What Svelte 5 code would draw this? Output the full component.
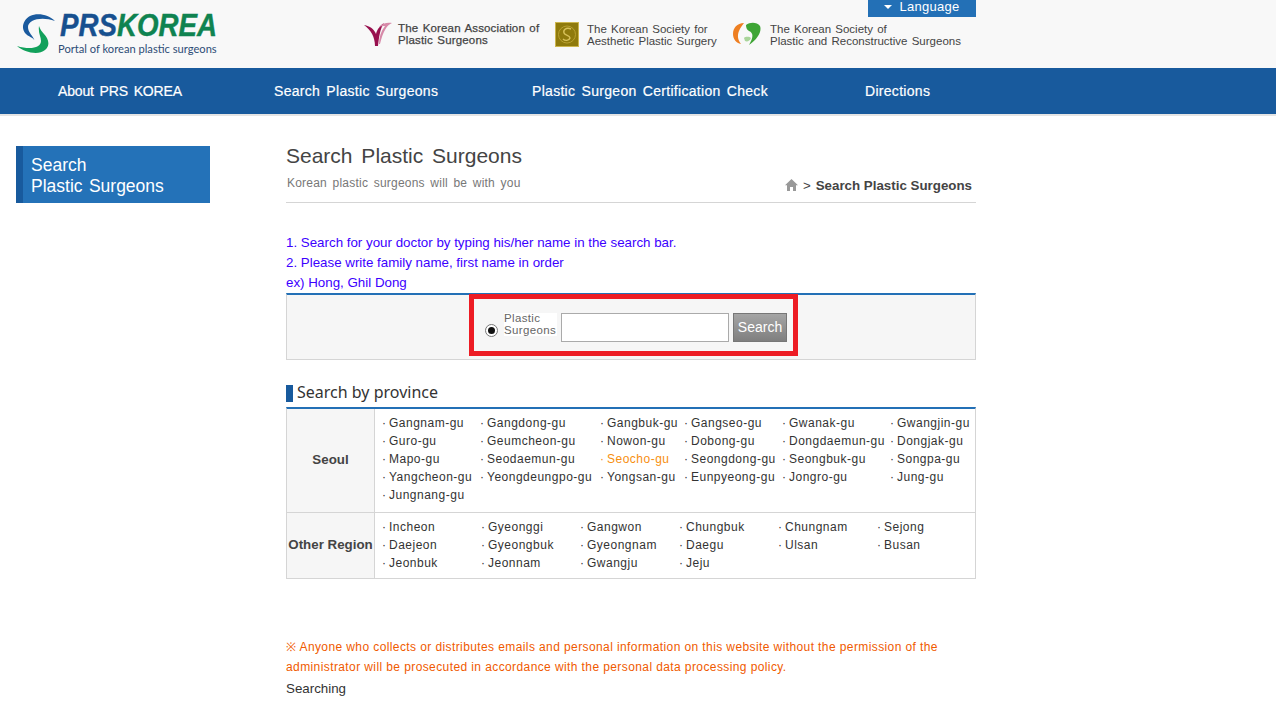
<script lang="ts">
  const seoul = [
    ['Gangnam-gu', 'Gangdong-gu', 'Gangbuk-gu', 'Gangseo-gu', 'Gwanak-gu', 'Gwangjin-gu'],
    ['Guro-gu', 'Geumcheon-gu', 'Nowon-gu', 'Dobong-gu', 'Dongdaemun-gu', 'Dongjak-gu'],
    ['Mapo-gu', 'Seodaemun-gu', 'Seocho-gu', 'Seongdong-gu', 'Seongbuk-gu', 'Songpa-gu'],
    ['Yangcheon-gu', 'Yeongdeungpo-gu', 'Yongsan-gu', 'Eunpyeong-gu', 'Jongro-gu', 'Jung-gu'],
    ['Jungnang-gu']
  ];
  const others = [
    'Incheon', 'Gyeonggi', 'Gangwon', 'Chungbuk', 'Chungnam', 'Sejong',
    'Daejeon', 'Gyeongbuk', 'Gyeongnam', 'Daegu', 'Ulsan', 'Busan',
    'Jeonbuk', 'Jeonnam', 'Gwangju', 'Jeju'
  ];
  const navItems = ['About PRS KOREA', 'Search Plastic Surgeons', 'Plastic Surgeon Certification Check', 'Directions'];
</script>

<header class="top">
  <div class="top-inner">
    <a class="logo" href="#top">
      <svg class="logo-mark" width="40" height="42" viewBox="0 0 40 42">
        <path d="M39 8C33 2 22 -1 14 3C7 7 5 15 9 20C12 24 18 24 19 29C17 22 12 20 12 14C12 7 25 3 39 8Z" fill="#1a5a9e" />
        <path d="M1 33C8 39 22 43 29 37C35 32 32 25 28 21C26 19 24 16 23 13C22 20 25 24 25 28C25 35 14 37 1 33Z" fill="#12a15b" />
      </svg>
      <span class="logo-text">
        <span class="logo-name"><span class="prs">PRS</span><span class="korea">KOREA</span></span>
        <span class="logo-sub">Portal of korean plastic surgeons</span>
      </span>
    </a>
    <div class="top-right">
      <button class="lang"><span class="caret"></span>Language</button>
      <div class="societies">
        <div class="society s1">
          <svg width="28" height="24" viewBox="0 0 28 24">
            <path d="M0 3C6 4 10 7 12 12C13 7 17 3 20 1C16 7 15 15 14 24H11C11 15 7 8 0 3Z" fill="#98104e" />
            <path d="M15 5C18 1 24 0 28 1C23 3 19 9 16 22H15C15 15 17 9 21 4C19 4 17 4 15 5Z" fill="#d78aa9" />
          </svg>
          <span>The Korean Association of<br />Plastic Surgeons</span>
        </div>
        <div class="society s2">
          <svg width="24" height="25" viewBox="0 0 24 25">
            <rect width="24" height="25" fill="#cdb64e" />
            <rect x="1" y="1" width="22" height="23" fill="#8f7a0c" />
            <circle cx="12" cy="12.5" r="8.5" fill="none" stroke="#b8a030" stroke-width="1" />
            <path d="M16 7C11 5 8 8 9 11C10 14 15 13 15 16C14 19 10 19 8 17" fill="none" stroke="#d8c25a" stroke-width="1.4" />
          </svg>
          <span>The Korean Society for<br />Aesthetic Plastic Surgery</span>
        </div>
        <div class="society s3">
          <svg width="28" height="24" viewBox="0 0 28 24">
            <path d="M11 1C4 1 0 6 0 12C0 17 3 21 8 22C5 18 4 14 6 9C7 6 9 4 11 1Z" fill="#ee7f22" />
            <path d="M13 3C17 0 24 0 27 4C29 9 25 17 16 23C20 16 21 11 16 9C14 8 13 6 13 3Z" fill="#3ea535" />
            <path d="M11 16C13 14 17 15 18 16C17 19 14 20 12 19Z" fill="#a9d59a" />
          </svg>
          <span>The Korean Society of<br />Plastic and Reconstructive Surgeons</span>
        </div>
      </div>
    </div>
  </div>
</header>

<nav class="nav">
  {#each navItems as item}
    <a href="#top">{item}</a>
  {/each}
</nav>

<div class="page">
  <aside class="side">
    <h2>Search<br />Plastic Surgeons</h2>
  </aside>

  <main class="content">
    <div class="title-block">
      <div>
        <h1>Search Plastic Surgeons</h1>
        <p class="subtitle">Korean plastic surgeons will be with you</p>
      </div>
      <div class="crumb">
        <svg width="13" height="12" viewBox="0 0 13 12">
          <path d="M6.5 0L13 6.2H11V12H8V8H5V12H2V6.2H0Z" fill="#999" />
        </svg>
        <span class="sep">&gt;</span>
        <strong>Search Plastic Surgeons</strong>
      </div>
    </div>

    <div class="notes">
      <p>1. Search for your doctor by typing his/her name in the search bar.</p>
      <p>2. Please write family name, first name in order</p>
      <p>ex) Hong, Ghil Dong</p>
    </div>

    <div class="search-box">
      <form class="search-form" on:submit|preventDefault>
        <span class="radio"><span></span></span>
        <span class="radio-label"><span>Plastic<br />Surgeons</span></span>
        <input type="text" aria-label="Name" />
        <button type="submit">Search</button>
      </form>
    </div>

    <h3 class="province">Search by province</h3>

    <div class="regions">
      <div class="region">
        <div class="region-name">Seoul</div>
        <div class="seoul-list">
          {#each seoul as row}
            {#each row as name}
              <a class="district" class:active={name === 'Seocho-gu'} href="#top">{name}</a>
            {/each}
          {/each}
        </div>
      </div>
      <div class="region">
        <div class="region-name">Other Region</div>
        <div class="other-list">
          {#each others as name}
            <a class="district" href="#top">{name}</a>
          {/each}
        </div>
      </div>
    </div>

    <p class="warning">※ Anyone who collects or distributes emails and personal information on this website without the permission of the administrator will be prosecuted in accordance with the personal data processing policy.</p>
    <p class="searching">Searching</p>
  </main>
</div>

<style>
  :global(body) {
    background: #fff;
    font-family: "Liberation Sans", Arial, sans-serif;
    color: #333;
  }
  p, h1, h2, h3 {
    margin: 0;
    font-weight: normal;
  }
  a {
    color: inherit;
    text-decoration: none;
  }

  .top {
    height: 68px;
    background: #f8f8f8;
  }
  .top-inner {
    width: 976px;
    height: 68px;
    display: flex;
    justify-content: space-between;
  }
  .logo {
    display: flex;
    gap: 4px;
    margin: 13px 0 0 16px;
    align-items: flex-start;
  }
  .logo-text {
    display: flex;
    flex-direction: column;
    margin-top: -3px;
  }
  .logo-name {
    font-size: 31px;
    line-height: 31px;
    font-weight: bold;
    font-style: italic;
    white-space: nowrap;
    transform: scaleX(0.894);
    transform-origin: left center;
    -webkit-text-stroke: 0.4px currentColor;
  }
  .prs { color: #17508f; }
  .korea { color: #0f8350; }
  .logo-sub {
    font-family: Lato, sans-serif;
    font-size: 11.15px;
    line-height: 15px;
    margin: 0 0 0 -2px;
    color: #2d4c76;
    white-space: nowrap;
  }
  .top-right {
    display: flex;
    flex-direction: column;
    align-items: flex-end;
  }
  .lang {
    width: 108px;
    height: 17px;
    border: 0;
    padding: 0 0 4px;
    background: #2370b6;
    color: #fff;
    font-family: inherit;
    font-size: 13px;
    line-height: 13px;
    letter-spacing: 0.3px;
    display: flex;
    align-items: center;
    justify-content: center;
    gap: 7px;
  }
  .caret {
    width: 0;
    height: 0;
    border-left: 4px solid transparent;
    border-right: 4px solid transparent;
    border-top: 4px solid #fff;
  }
  .societies {
    display: flex;
    width: 612px;
    margin-top: 5px;
  }
  .society {
    display: flex;
    gap: 6px;
    font-size: 11.5px;
    line-height: 12px;
    color: #444;
    word-spacing: 1px;
  }
  .society span {
    white-space: nowrap;
  }
  .s1 { width: 191px; }
  .s1 span {
    letter-spacing: 0.16px;
    -webkit-text-stroke: 0.25px #444;
  }
  .s2 { width: 178px; gap: 8px; }
  .s2 span, .s3 span { margin-top: 1px; }
  .s3 { gap: 9px; }

  .nav {
    height: 46px;
    background: #185a9d;
    border-bottom: 2px solid #e4e4e4;
    padding-left: 58px;
    display: grid;
    grid-template-columns: 216px 258px 333px auto;
    align-items: center;
  }
  .nav a {
    color: #fff;
    font-size: 14px;
    letter-spacing: 0.3px;
    word-spacing: 2px;
    -webkit-text-stroke: 0.2px #fff;
  }
  .nav a:first-child {
    letter-spacing: -0.15px;
  }

  .page {
    display: flex;
    width: 976px;
    padding: 30px 0 0 16px;
    box-sizing: border-box;
  }
  .side {
    width: 194px;
    flex: none;
    margin-right: 76px;
  }
  .side h2 {
    height: 57px;
    box-sizing: border-box;
    background: #2472b8;
    border-left: 7px solid #185a9d;
    padding: 9px 0 0 8px;
    color: #fff;
    font-size: 17.5px;
    line-height: 21px;
    word-spacing: 1.5px;
  }

  .content {
    width: 690px;
    flex: none;
  }
  .title-block {
    height: 56px;
    border-bottom: 1px solid #d5d5d5;
    display: flex;
    justify-content: space-between;
    align-items: flex-end;
  }
  h1 {
    font-size: 21px;
    line-height: 20px;
    color: #444;
    word-spacing: 3px;
  }
  .subtitle {
    margin: 10px 0 12px 1px;
    font-size: 12px;
    line-height: 14px;
    color: #777;
    letter-spacing: 0.22px;
    word-spacing: 2px;
  }
  .crumb {
    display: flex;
    align-items: center;
    gap: 5px;
    height: 16px;
    margin: 0 4px 9px 0;
    font-size: 13.33px;
    color: #444;
  }

  .notes {
    margin-top: 30px;
    color: #3c00ff;
    font-size: 13.33px;
    line-height: 20px;
  }

  .search-box {
    height: 67px;
    box-sizing: border-box;
    border: 1px solid #d5d5d5;
    border-top: 2px solid #2370b6;
    background: #f6f6f6;
    display: flex;
    justify-content: center;
  }
  .search-form {
    box-sizing: border-box;
    width: 329px;
    height: 62px;
    margin: -1px 0 0 5px;
    border: 5px solid #ed1c24;
    padding: 14px 6px 0 11px;
    display: flex;
    align-items: flex-start;
  }
  .radio {
    box-sizing: border-box;
    width: 13px;
    height: 13px;
    margin-top: 11px;
    border: 1px solid #777;
    border-radius: 50%;
    background: #fff;
    display: flex;
    align-items: center;
    justify-content: center;
  }
  .radio span {
    width: 7px;
    height: 7px;
    border-radius: 50%;
    background: #111;
  }
  .radio-label {
    width: 53px;
    height: 23px;
    margin: 0 4px 0 6px;
    background: #fff;
    color: #666;
    font-size: 11.5px;
    line-height: 12px;
    letter-spacing: 0.35px;
    white-space: nowrap;
  }
  .radio-label span {
    display: block;
    margin-top: -1px;
  }
  .search-form input {
    box-sizing: border-box;
    width: 168px;
    height: 29px;
    border: 1px solid #aaa;
    background: #fff;
    padding: 0 4px;
  }
  .search-form button {
    box-sizing: border-box;
    width: 54px;
    height: 29px;
    margin-left: 4px;
    border: 1px solid #777;
    padding: 0 0 2px;
    background: linear-gradient(#a5a5a5, #7f7f7f);
    color: #fff;
    font-family: inherit;
    font-size: 14px;
  }

  .province {
    margin-top: 25px;
    height: 17px;
    border-left: 7px solid #185a9d;
    padding-left: 4px;
    font-family: "Noto Sans", sans-serif;
    font-size: 16px;
    line-height: 15px;
    color: #333;
  }

  .regions {
    margin-top: 5px;
    border: 1px solid #d5d5d5;
    border-top: 2px solid #2370b6;
  }
  .region {
    display: grid;
    grid-template-columns: 88px 1fr;
  }
  .region + .region {
    border-top: 1px solid #d5d5d5;
  }
  .region-name {
    background: #f6f6f6;
    border-right: 1px solid #d5d5d5;
    padding-bottom: 3px;
    display: flex;
    align-items: center;
    justify-content: center;
    font-size: 13.33px;
    font-weight: bold;
    color: #444;
    white-space: nowrap;
  }
  .seoul-list, .other-list {
    display: grid;
    padding: 5px 0 7px 7px;
    grid-auto-rows: 18px;
  }
  .seoul-list {
    grid-template-columns: 98px 120px 84px 98px 108px 80px;
    height: 91px;
  }
  .other-list {
    grid-template-columns: repeat(6, 99px);
    padding-bottom: 6px;
  }
  .district {
    font-size: 12px;
    line-height: 18px;
    letter-spacing: 0.5px;
    color: #333;
    white-space: nowrap;
  }
  .district::before {
    content: "·";
    display: inline-block;
    width: 7px;
    letter-spacing: 0;
  }
  .district.active {
    color: #f78f0f;
  }

  .warning {
    margin-top: 58px;
    width: 670px;
    color: #f05a00;
    font-size: 12px;
    line-height: 20px;
    letter-spacing: 0.4px;
  }
  .searching {
    margin-top: 2px;
    font-size: 13.33px;
    line-height: 20px;
    color: #333;
  }
</style>
